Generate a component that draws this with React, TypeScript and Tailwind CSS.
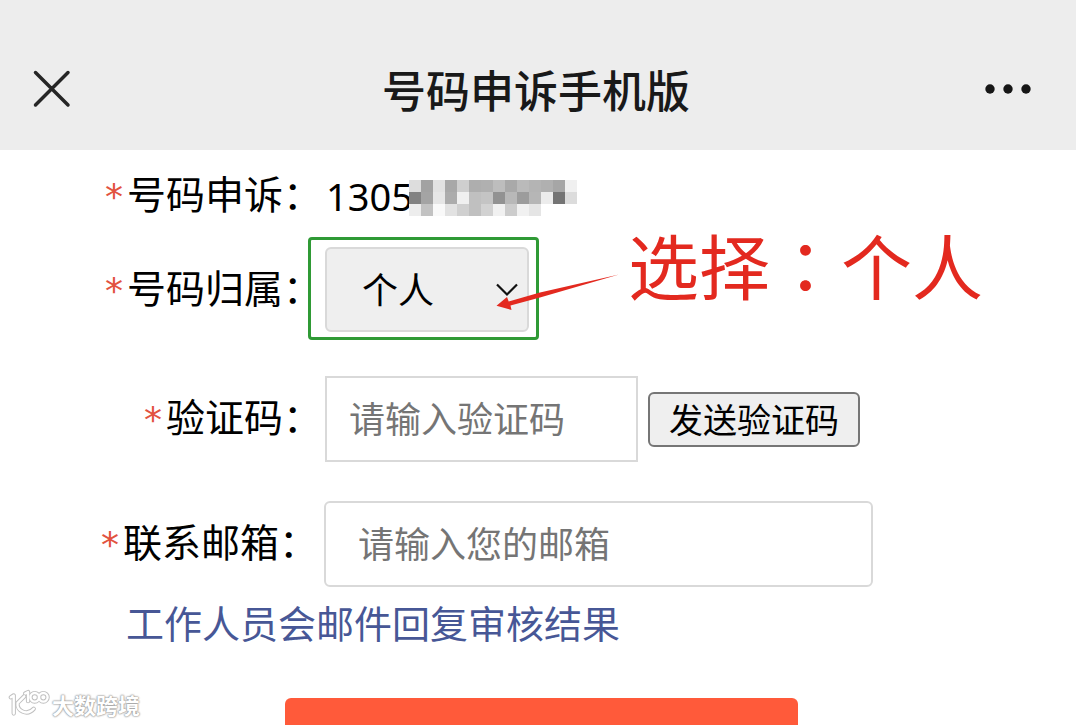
import type { ReactNode } from "react";

const MOSAIC: string[][] = [
  ["#dddddd", "#a2a2a2", "#e2e2e2", "#a8a8a8", "#cfcfcf", "#aeaeae", "#b0b0b0", "#bdbdbd", "#a9a9a9", "#bababa", "#b4b4b4", "#b0b0b0", "#a6a6a6", "#f0f0f0"],
  ["#828282", "#a4a4a4", "#e6e6e6", "#acacac", "#f0f0f0", "#c0c0c0", "#c4c4c4", "#929292", "#b8b8b8", "#9c9c9c", "#b6b6b6", "#ececec", "#747474", "#dcdcdc"],
  ["#ededed", "#c2c2c2", "#f9f9f9", "#e2e2e2", "#d0d0d0", "#c0c0c0", "#d2d2d2", "#f1f1f1", "#cccccc", "#f1f1f1", "#e5e5e5", "#ffffff", "#ffffff", "#ffffff"],
];

function Caption({ htmlFor, children }: { htmlFor?: string; children: ReactNode }) {
  const inner = (
    <>
      <span className="mr-1 font-['DejaVu_Sans'] text-[36px] leading-none text-[#e2533f]">*</span>
      {children}：
    </>
  );
  const look = "flex w-[322px] shrink-0 items-baseline justify-end pb-2 whitespace-nowrap text-[39px] leading-[56px]";
  return htmlFor ? (
    <label htmlFor={htmlFor} className={look}>{inner}</label>
  ) : (
    <span className={look}>{inner}</span>
  );
}

function Watermark() {
  const strokes = (
    <>
      <path d="M3 8 L6 6 V25" />
      <path d="M17 7 L10 14 C9 22 20 28 27 20" />
      <path d="M18 4 L21 2.500 V12" />
      <circle cx="28" cy="8" r="4.500" />
      <circle cx="37" cy="8" r="4.500" />
    </>
  );
  return (
    <div className="absolute bottom-1.5 left-2 flex items-center gap-0.5 opacity-90">
      <svg width="42" height="30" viewBox="0 0 44 30" fill="none" strokeLinecap="round" strokeLinejoin="round" aria-hidden="true">
        <g stroke="#b9b9b9" strokeWidth="4.500">{strokes}</g>
        <g stroke="#ffffff" strokeWidth="2.500">{strokes}</g>
      </svg>
      <span className="text-[22px] leading-[30px] font-bold text-white [text-shadow:0_0_2px_#888,0_0_2px_#999,0_0_1px_#999]">
        大数跨境
      </span>
    </div>
  );
}

export default function App() {
  return (
    <div
      lang="zh-CN"
      className="relative flex h-screen flex-col overflow-hidden bg-white font-['Noto_Sans_CJK_SC',sans-serif] text-black"
    >
      <header className="flex shrink-0 items-center justify-between bg-[#ededed] pt-[56px] pr-11 pb-[28px] pl-8">
        <button type="button" aria-label="关闭" className="w-14">
          <svg width="40" height="40" viewBox="0 0 40 40" stroke="#262626" strokeWidth="3.500" strokeLinecap="round" aria-hidden="true">
            <path d="M3.500 3.500 L36 36 M36 3.500 L3.500 36" />
          </svg>
        </button>
        <h1 className="text-[44px] leading-[66px] font-medium text-[#191919]">号码申诉手机版</h1>
        <button type="button" aria-label="更多" className="w-12">
          <svg width="48" height="12" viewBox="0 0 48 12" fill="#161616" aria-hidden="true">
            <circle cx="6" cy="6" r="4.700" />
            <circle cx="24" cy="6" r="4.700" />
            <circle cx="42" cy="6" r="4.700" />
          </svg>
        </button>
      </header>

      <form className="flex flex-col" onSubmit={(e) => e.preventDefault()}>
        <div className="mt-3.5 flex items-center gap-1">
          <Caption>号码申诉</Caption>
          <span className="flex items-center">
            <span className="font-['Noto_Sans'] text-[38px] leading-[56px]">1305</span>
            <svg width="168" height="36" viewBox="0 0 168 36" shapeRendering="crispEdges" className="mt-1 -ml-1" aria-hidden="true">
              {MOSAIC.map((row, y) =>
                row.map((fill, x) => <rect key={`${x}-${y}`} x={x * 12} y={y * 12} width="12" height="12" fill={fill} />),
              )}
            </svg>
          </span>
        </div>

        <div className="mt-[19px] flex items-center gap-[3px]">
          <Caption htmlFor="owner">号码归属</Caption>
          <div className="relative">
            <select
              id="owner"
              className="h-[85px] w-[204px] appearance-none rounded-md border-2 border-[#d9d9d9] bg-[#efefef] pb-1 pl-[35px] text-[36px] text-black outline-none"
            >
              <option>个人</option>
            </select>
            <svg
              width="24"
              height="16"
              viewBox="0 0 24 16"
              fill="none"
              stroke="#111111"
              strokeWidth="2.200"
              className="pointer-events-none absolute top-[35px] right-2.5"
              aria-hidden="true"
            >
              <path d="M2 2.500 L12 12.500 L22 2.500" />
            </svg>
            <div className="pointer-events-none absolute -top-2.5 -right-2.5 -bottom-2 -left-[17px] rounded-sm border-3 border-[#2f9a35]" />
            <svg
              width="126"
              height="40"
              viewBox="495 272 126 40"
              fill="#e3291f"
              className="pointer-events-none absolute top-[25px] left-[170px]"
              aria-hidden="true"
            >
              <path d="M496.500 305.700 L507 297 L508.700 301.500 L540 292.500 L619 274.500 L540 297.500 L510.500 305.500 L511.500 310 Z" />
            </svg>
            <p className="pointer-events-none absolute -top-9 left-[303px] text-[71px] leading-[104px] whitespace-nowrap text-[#e3291f]">
              选择
              <span lang="zh-TW" className="font-['Noto_Sans_CJK_TC',sans-serif]">：</span>
              个人
            </p>
          </div>
        </div>

        <div className="mt-11 flex items-center gap-[3px]">
          <Caption htmlFor="code">验证码</Caption>
          <input
            id="code"
            placeholder="请输入验证码"
            className="h-[86px] w-full max-w-[313px] border-2 border-[#d9d9d9] px-[22px] pb-1 text-[36px] outline-none placeholder:text-[#757575]"
          />
          <button
            type="button"
            className="ml-[7px] h-[55px] w-[212px] shrink-0 rounded-md border-2 border-[#767676] bg-[#efefef] text-[34px] leading-[50px]"
          >
            发送验证码
          </button>
        </div>

        <div className="mt-[39px] flex items-center gap-1.5">
          <div className="-ml-1">
            <Caption htmlFor="mail">联系邮箱</Caption>
          </div>
          <input
            id="mail"
            type="email"
            placeholder="请输入您的邮箱"
            className="h-[86px] w-full max-w-[549px] rounded-md border-2 border-[#d9d9d9] px-8 pb-1 text-[36px] outline-none placeholder:text-[#757575]"
          />
        </div>

        <p className="mt-[7px] pl-[126px] text-[38px] leading-[56px] text-[#475796]">工作人员会邮件回复审核结果</p>

        <div className="mt-12 pl-1.5">
          <button
            type="submit"
            aria-label="提交"
            className="mx-auto block h-24 w-full max-w-[513px] rounded-md bg-[#ff5a3a]"
          />
        </div>
      </form>

      <Watermark />
    </div>
  );
}
